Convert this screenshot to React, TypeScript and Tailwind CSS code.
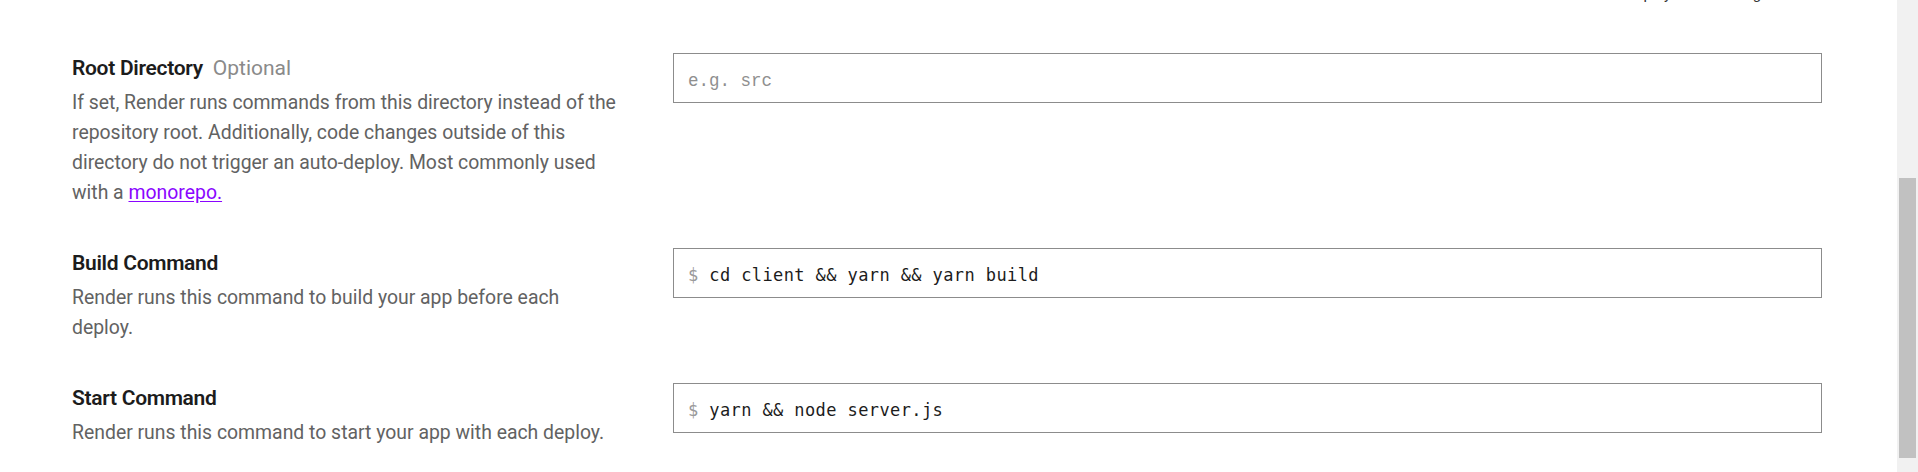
import React from 'react';

type Field = {
  title: string;
  optional?: boolean;
  description: React.ReactNode;
  placeholder?: string;
  value?: string;
  prompt?: boolean;
};

const fields: Field[] = [
  {
    title: 'Root Directory',
    optional: true,
    description: (
      <>
        If set, Render runs commands from this directory instead of the repository root. Additionally, code
        changes outside of this directory do not trigger an auto-deploy. Most commonly used with a{' '}
        <a href="#" className="text-[#8a05ff] underline underline-offset-2">
          monorepo.
        </a>
      </>
    ),
    placeholder: 'e.g. src'
  },
  {
    title: 'Build Command',
    description: 'Render runs this command to build your app before each deploy.',
    value: 'cd client && yarn && yarn build',
    prompt: true
  },
  {
    title: 'Start Command',
    description: 'Render runs this command to start your app with each deploy.',
    value: 'yarn && node server.js',
    prompt: true
  }
];

const FieldRow = ({ title, optional, description, placeholder, value, prompt }: Field) => (
  <div className="grid grid-cols-[545px_1fr] gap-x-[56px]">
    <div>
      <div className="flex items-baseline gap-[10px] text-[21px] leading-[30px]">
        <span className="font-semibold tracking-[-0.3px] text-[#1c1c1c]">{title}</span>
        {optional && <span className="text-[#8a8a8a]">Optional</span>}
      </div>
      <p className="mt-[5px] text-[19.4px] leading-[30px] text-[#626262]">{description}</p>
    </div>

    <label className="flex h-[50px] items-center border border-[#8c8c8c] px-[14px] pt-[6px]">
      {prompt && (
        <span className="mr-[11px] font-['DejaVu_Sans_Mono',monospace] text-[17px] text-[#9a9a9a]">$</span>
      )}
      <input
        readOnly
        defaultValue={value}
        placeholder={placeholder}
        className="w-full bg-transparent font-['DejaVu_Sans_Mono',monospace] text-[17px] tracking-[0.4px] text-[#1c1c1c] outline-none placeholder:font-['Liberation_Mono',monospace] placeholder:text-[17.5px] placeholder:tracking-normal placeholder:text-[#8f8f8f]"
      />
    </label>
  </div>
);

export default function App() {
  return (
    <div className="flex h-[472px] w-full overflow-hidden bg-white font-['Roboto',sans-serif]">
      <main className="flex flex-1 flex-col pl-[72px] pr-[75px]">
        <div className="h-[4px] overflow-hidden">
          <p className="-mt-[16px] pl-[1492px] text-[15px] leading-[20px] whitespace-nowrap text-[#333]">
            Edit auto-deploy in the settings
          </p>
        </div>

        <div className="flex flex-col gap-[40px] pt-[49px]">
          {fields.map((field) => (
            <FieldRow key={field.title} {...field} />
          ))}
        </div>
      </main>

      <div className="w-[21px] shrink-0 bg-[#f1f1f1] px-[2px] pt-[178px]">
        <div className="h-[280px] bg-[#c1c1c1]" />
      </div>
    </div>
  );
}
